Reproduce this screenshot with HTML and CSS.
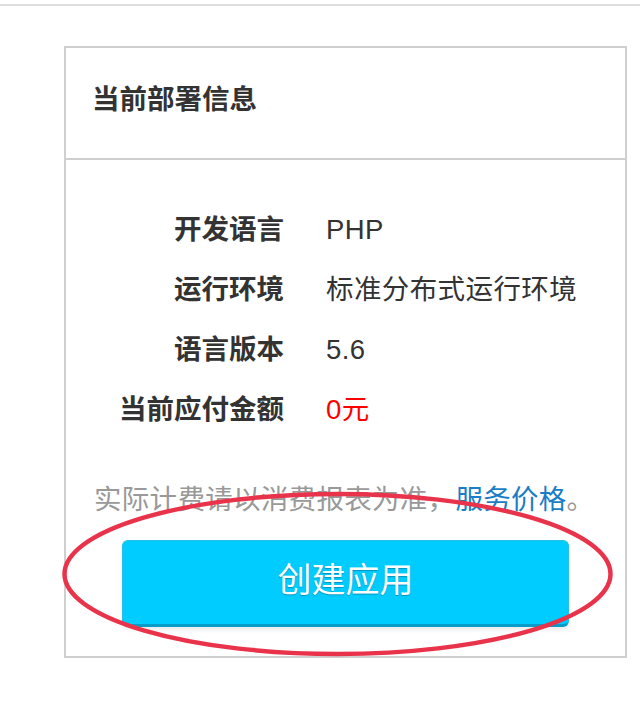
FILE: index.html
```html
<!DOCTYPE html>
<html lang="zh-CN">
<head>
<meta charset="utf-8">
<title>当前部署信息</title>
<link rel="stylesheet" href="styles.css">
</head>
<body>
<div class="topline"></div>
<section class="card">
  <header class="card-head">当前部署信息</header>
  <div class="card-body">
    <dl class="info">
      <dt>开发语言</dt><dd>PHP</dd>
      <dt>运行环境</dt><dd>标准分布式运行环境</dd>
      <dt>语言版本</dt><dd>5.6</dd>
      <dt>当前应付金额</dt><dd class="price">0元</dd>
    </dl>
    <p class="note">实际计费请以消费报表为准，<a class="link" href="#">服务价格</a>。</p>
    <div class="actions"><button class="btn" type="button">创建应用</button></div>
  </div>
</section>
<svg class="mark" width="640" height="720" viewBox="0 0 640 720" aria-hidden="true">
  <ellipse cx="337.5" cy="574" rx="273" ry="80" fill="none" stroke="#e9334a" stroke-width="4.5"/>
</svg>
</body>
</html>
```
FILE: styles.css
```css
html, body {
  margin: 0;
  padding: 0;
  background: #fff;
}
body {
  position: relative;
  width: 640px;
  height: 720px;
  overflow: hidden;
  font-family: "Liberation Sans", "Noto Sans CJK SC", sans-serif;
  color: #333;
}
.topline {
  margin-top: 4px;
  border-top: 2px solid #dedede;
}
.card {
  margin: 40px 0 0 64px;
  width: 559px;
  border: 2px solid #cfcfcf;
}
.card-head {
  height: 104px;
  line-height: 104px;
  padding: 0 0 6px 26px;
  font-size: 27.5px;
  font-weight: bold;
  color: #333;
  border-bottom: 2px solid #cfcfcf;
}
.card-body {
  padding: 40px 0 29px;
}
.info {
  display: grid;
  grid-template-columns: 218px 1fr;
  column-gap: 42px;
  margin: 0;
  font-size: 27.5px;
  line-height: 60px;
}
.info dt {
  text-align: right;
  font-weight: bold;
  color: #333;
}
.info dd {
  margin: 0;
  color: #333;
  letter-spacing: 0.4px;
}
.info dd.price {
  color: #ff0000;
}
.note {
  margin: 40px 0 0 28px;
  font-size: 27.5px;
  line-height: 40px;
  color: #999;
  white-space: nowrap;
  letter-spacing: 0.3px;
}
.link {
  color: #1a7dc6;
  text-decoration: none;
}
.actions {
  display: flex;
  justify-content: center;
  margin-top: 20px;
}
.btn {
  width: 447px;
  height: 87px;
  border: 1px solid #27bde6;
  border-bottom: 3px solid #0a9cc8;
  border-radius: 6px;
  background: #00ccff;
  color: #fff;
  font-family: "Liberation Sans", "Noto Sans CJK SC", sans-serif;
  font-size: 34px;
  line-height: 78px;
  padding: 0 0 5px;
  text-shadow: 0 1px 1px rgba(0, 80, 110, 0.45);
  box-shadow: 0 3px 4px rgba(0, 0, 0, 0.08);
  cursor: pointer;
}
.mark {
  position: absolute;
  left: 0;
  top: 0;
  pointer-events: none;
}
```
